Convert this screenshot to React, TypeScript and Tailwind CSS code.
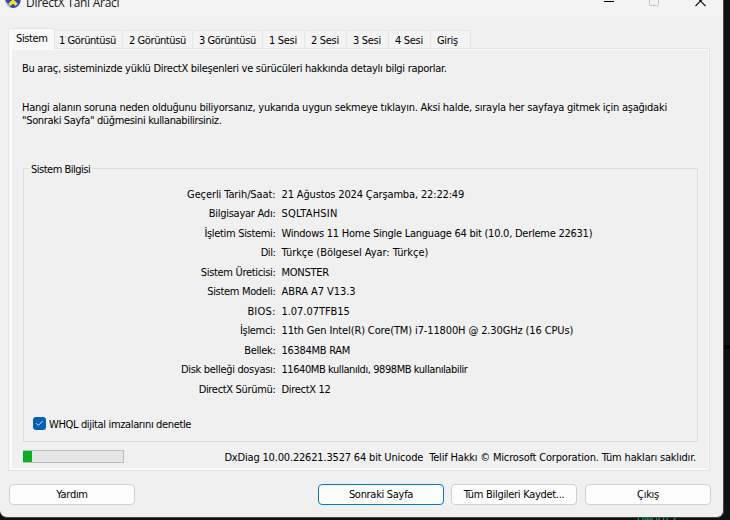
import { Check } from "lucide-react";

const tabs = [
  { label: "1 Görüntüsü", box: "w-[68px] pl-[4px]", text: "tracking-[-0.42px]" },
  { label: "2 Görüntüsü", box: "w-[70px] pl-[6px]", text: "tracking-[-0.42px]" },
  { label: "3 Görüntüsü", box: "w-[70px] pl-[6px]", text: "tracking-[-0.42px]" },
  { label: "1 Sesi", box: "w-[42px] pl-[6px]", text: "tracking-[-0.3px]" },
  { label: "2 Sesi", box: "w-[42px] pl-[6px]", text: "tracking-[-0.3px]" },
  { label: "3 Sesi", box: "w-[42px] pl-[6px]", text: "tracking-[-0.3px]" },
  { label: "4 Sesi", box: "w-[42px] pl-[6px]", text: "tracking-[-0.3px]" },
  { label: "Giriş", box: "w-[40px] pl-[6px]", text: "tracking-[-0.3px]" },
];

const rows = [
  { label: "Geçerli Tarih/Saat:", value: "21 Ağustos 2024 Çarşamba, 22:22:49", l: "tracking-[-0.1px]", v: "tracking-[-0.15px]" },
  { label: "Bilgisayar Adı:", value: "SQLTAHSIN", l: "tracking-[-0.25px]", v: "tracking-[0.23px]" },
  { label: "İşletim Sistemi:", value: "Windows 11 Home Single Language 64 bit (10.0, Derleme 22631)", l: "", v: "tracking-[-0.25px]" },
  { label: "Dil:", value: "Türkçe (Bölgesel Ayar: Türkçe)", l: "tracking-[-0.4px]", v: "tracking-[-0.06px]" },
  { label: "Sistem Üreticisi:", value: "MONSTER", l: "", v: "tracking-[-0.28px]" },
  { label: "Sistem Modeli:", value: "ABRA A7 V13.3", l: "", v: "tracking-[-0.07px]" },
  { label: "BIOS:", value: "1.07.07TFB15", l: "tracking-[0.2px]", v: "tracking-[-0.05px]" },
  { label: "İşlemci:", value: "11th Gen Intel(R) Core(TM) i7-11800H @ 2.30GHz (16 CPUs)", l: "tracking-[-0.32px]", v: "tracking-[-0.13px]" },
  { label: "Bellek:", value: "16384MB RAM", l: "", v: "tracking-[-0.28px]" },
  { label: "Disk belleği dosyası:", value: "11640MB kullanıldı, 9898MB kullanılabilir", l: "", v: "tracking-[-0.43px]" },
  { label: "DirectX Sürümü:", value: "DirectX 12", l: "", v: "" },
];

function TitleBar() {
  return (
    <header className="relative h-[17px] shrink-0 overflow-hidden bg-[#f3f3f3]">
      <svg className="absolute left-[5px] top-[-8px]" width="16" height="17" viewBox="0 0 16 17">
        <circle cx="8" cy="8.5" r="7.6" fill="#2f42c4" />
        <path d="M0.500 9a7.500 7.500 0 0 0 6 7l-3.500-4z" fill="#c3c9ee" />
        <path d="M3 2l5 5.500 5-5.500M8 6.500v3M8 9l-3.500 4M8 9l3.500 4" stroke="#f0e616" strokeWidth="3.4" fill="none" />
      </svg>
      <span className="absolute left-[26px] top-[-6px] whitespace-nowrap font-['Open_Sans',sans-serif] text-[12px] leading-[18px] tracking-[-0.27px] text-[#1a1a1a]">
        DirectX Tanı Aracı
      </span>
      <svg className="absolute right-[12px] top-0" width="110" height="8" viewBox="0 0 110 8" fill="none">
        <path d="M3 1.5h10" stroke="#000" />
        <path d="M48.500 -4V4.500a1 1 0 0 0 1 1h7a1 1 0 0 0 1-1V-4" stroke="#c4c4c4" />
        <path d="M94.500 6L104.500 -4M104.500 6L94.500 -4" stroke="#111" strokeWidth="1.1" />
      </svg>
    </header>
  );
}

function TabStrip() {
  return (
    <nav className="flex h-[20px] items-end pl-[8px]">
      <div className="z-10 flex h-[21px] w-[47px] shrink-0 items-start self-start border border-b-0 border-[#e5e5e5] bg-[#f9f9f9] pl-[7px] pt-[3px]">
        <span className="tracking-[-0.4px]">Sistem</span>
      </div>
      {tabs.map((t) => (
        <div
          key={t.label}
          className={`flex h-[18px] shrink-0 items-start border-r border-t border-[#e5e5e5] bg-[#f3f3f3] pt-[3px] ${t.box}`}
        >
          <span className={t.text}>{t.label}</span>
        </div>
      ))}
    </nav>
  );
}

function SystemInfo() {
  return (
    <section className="relative ml-[11px] mr-[10px] mt-[41px] h-[274px] border border-[#dcdcdc] pt-[18.5px]">
      <h2 className="absolute left-[5px] top-[-6px] bg-[#f0f0f0] px-[2px] tracking-[-0.5px]">Sistem Bilgisi</h2>
      <dl>
        {rows.map((r) => (
          <div key={r.label} className="flex h-[19.5px] items-start gap-[6px]">
            <dt className={`w-[251.5px] text-right ${r.l}`}>{r.label}</dt>
            <dd className={r.v}>{r.value}</dd>
          </div>
        ))}
      </dl>
      <label className="absolute left-[9px] top-[248px] flex items-start gap-[3px] tracking-[-0.35px]">
        <span className="flex size-[13px] items-center justify-center rounded-[3px] bg-[#0560b6]">
          <Check className="size-[9px] text-[#cfe4f7]" strokeWidth={2.4} />
        </span>
        <span className="pt-px">WHQL dijital imzalarını denetle</span>
      </label>
    </section>
  );
}

const button =
  "flex h-[21px] w-[126px] items-center justify-center rounded-[4px] border bg-[#fdfdfd] tracking-[-0.3px]";

export default function App() {
  return (
    <div className="relative h-[520px] w-[730px] overflow-hidden bg-[#111111] font-['DejaVu_Sans_Condensed','DejaVu_Sans',sans-serif] text-[11px] leading-[13px] tracking-[-0.32px] whitespace-nowrap text-black">
      <div className="absolute right-0 top-[345px] h-[4px] w-[7px] bg-black" />
      <div className="absolute left-[637px] top-[514px] font-['Liberation_Mono',monospace] text-[12px] leading-[13px] text-[#2aa583]">
        öwöötZ
      </div>
      <main className="relative flex h-[518px] w-[724px] flex-col overflow-hidden rounded-b-[7px] border-b border-r border-[#484848] bg-[#f0f0f0]">
        <TitleBar />
        <div className="mt-[11px]">
          <TabStrip />
          <div className="ml-[8px] h-[423px] w-[702px] border border-[#e3e3e3]">
            <div className="h-full border-b-2 border-l-[3px] border-r border-t border-[#fafafa]">
              <p className="ml-[10px] mt-[12px] tracking-[-0.28px]">
                Bu araç, sisteminizde yüklü DirectX bileşenleri ve sürücüleri hakkında detaylı bilgi raporlar.
              </p>
              <p className="ml-[10px] mt-[26px] tracking-[-0.245px]">
                Hangi alanın soruna neden olduğunu biliyorsanız, yukarıda uygun sekmeye tıklayın. Aksi halde, sırayla her sayfaya gitmek için aşağıdaki
                <br />
                <span className="tracking-[-0.34px]">"Sonraki Sayfa" düğmesini kullanabilirsiniz.</span>
              </p>
              <SystemInfo />
              <div className="ml-[11px] mr-[12px] mt-[8px] flex items-start justify-between">
                <div className="h-[13px] w-[101px] border border-l-0 border-[#bcbcbc] bg-[#e6e6e6]">
                  <div className="h-full w-[9px] bg-[#06b025]" />
                </div>
                <span className="mt-px whitespace-pre tracking-[-0.18px]">
                  {"DxDiag 10.00.22621.3527 64 bit Unicode  Telif Hakkı © Microsoft Corporation. Tüm hakları saklıdır."}
                </span>
              </div>
            </div>
          </div>
        </div>
        <footer className="mt-[13px] flex pl-[9px]">
          <button className={`${button} border-[#d0d0d0]`}>Yardım</button>
          <button className={`${button} ml-[183px] border-[#0078d4]`}>Sonraki Sayfa</button>
          <button className={`${button} ml-[7px] border-[#d0d0d0]`}>Tüm Bilgileri Kaydet...</button>
          <button className={`${button} ml-[8px] border-[#d0d0d0]`}>Çıkış</button>
        </footer>
      </main>
    </div>
  );
}
